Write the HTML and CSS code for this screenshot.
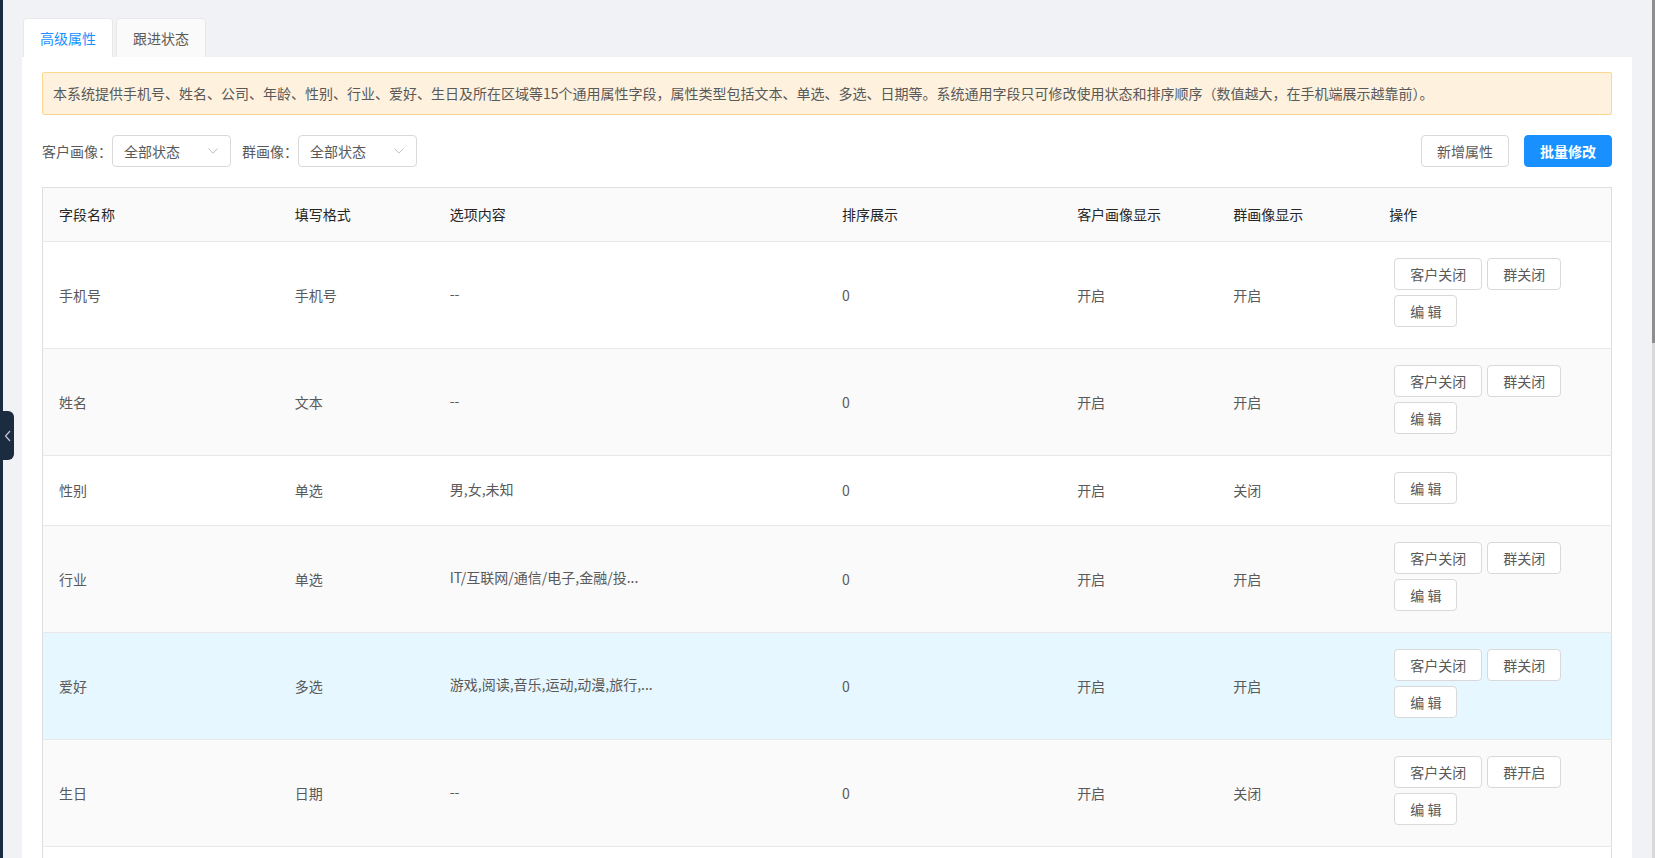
FILE: index.html
```html
<!DOCTYPE html>
<html lang="zh-CN">
<head>
<meta charset="utf-8">
<title>高级属性</title>
<link rel="stylesheet" href="styles.css">
</head>
<body>
<div class="app">
  <div class="sidebar"></div>
  <div class="collapse">
    <svg width="8" height="12" viewBox="0 0 8 12"><path d="M6 1 L1.5 6 L6 11" fill="none" stroke="#c3cad6" stroke-width="1.2"/></svg>
  </div>
  <main class="main">
    <div class="tabs">
      <div class="tab active">高级属性</div>
      <div class="tab">跟进状态</div>
    </div>
    <section class="panel">
      <div class="alert">本系统提供手机号、姓名、公司、年龄、性别、行业、爱好、生日及所在区域等15个通用属性字段，属性类型包括文本、单选、多选、日期等。系统通用字段只可修改使用状态和排序顺序（数值越大，在手机端展示越靠前）。</div>
      <div class="toolbar">
        <div class="filters">
          <span class="label">客户画像：</span>
          <div class="select"><span>全部状态</span><svg class="arrow" width="10" height="6" viewBox="0 0 10 6"><path d="M0.5 0.5 L5 5.2 L9.5 0.5" fill="none" stroke="#bfbfbf" stroke-width="1"/></svg></div>
          <span class="label label-gap">群画像：</span>
          <div class="select"><span>全部状态</span><svg class="arrow" width="10" height="6" viewBox="0 0 10 6"><path d="M0.5 0.5 L5 5.2 L9.5 0.5" fill="none" stroke="#bfbfbf" stroke-width="1"/></svg></div>
        </div>
        <div class="actions">
          <button class="btn">新增属性</button>
          <button class="btn primary">批量修改</button>
        </div>
      </div>
      <table class="grid">
        <colgroup>
          <col class="c1"><col class="c2"><col class="c3"><col class="c4"><col class="c5"><col class="c6"><col class="c7">
        </colgroup>
        <thead>
          <tr><th>字段名称</th><th>填写格式</th><th>选项内容</th><th>排序展示</th><th>客户画像显示</th><th>群画像显示</th><th>操作</th></tr>
        </thead>
        <tbody>
          <tr>
            <td>手机号</td><td>手机号</td><td><div class="opt">--</div></td><td>0</td><td>开启</td><td>开启</td>
            <td class="op"><div class="ops"><div class="ops-row"><button class="btn sm">客户关闭</button><button class="btn sm">群关闭</button></div><div class="ops-row"><button class="btn sm">编 辑</button></div></div></td>
          </tr>
          <tr class="alt">
            <td>姓名</td><td>文本</td><td><div class="opt">--</div></td><td>0</td><td>开启</td><td>开启</td>
            <td class="op"><div class="ops"><div class="ops-row"><button class="btn sm">客户关闭</button><button class="btn sm">群关闭</button></div><div class="ops-row"><button class="btn sm">编 辑</button></div></div></td>
          </tr>
          <tr>
            <td>性别</td><td>单选</td><td><div class="opt">男,女,未知</div></td><td>0</td><td>开启</td><td>关闭</td>
            <td class="op"><div class="ops"><div class="ops-row"><button class="btn sm">编 辑</button></div></div></td>
          </tr>
          <tr class="alt">
            <td>行业</td><td>单选</td><td><div class="opt">IT/互联网/通信/电子,金融/投...</div></td><td>0</td><td>开启</td><td>开启</td>
            <td class="op"><div class="ops"><div class="ops-row"><button class="btn sm">客户关闭</button><button class="btn sm">群关闭</button></div><div class="ops-row"><button class="btn sm">编 辑</button></div></div></td>
          </tr>
          <tr class="hover">
            <td>爱好</td><td>多选</td><td><div class="opt">游戏,阅读,音乐,运动,动漫,旅行,...</div></td><td>0</td><td>开启</td><td>开启</td>
            <td class="op"><div class="ops"><div class="ops-row"><button class="btn sm">客户关闭</button><button class="btn sm">群关闭</button></div><div class="ops-row"><button class="btn sm">编 辑</button></div></div></td>
          </tr>
          <tr class="alt">
            <td>生日</td><td>日期</td><td><div class="opt">--</div></td><td>0</td><td>开启</td><td>关闭</td>
            <td class="op"><div class="ops"><div class="ops-row"><button class="btn sm">客户关闭</button><button class="btn sm">群开启</button></div><div class="ops-row"><button class="btn sm">编 辑</button></div></div></td>
          </tr>
          <tr class="last">
            <td></td><td></td><td></td><td></td><td></td><td></td><td></td>
          </tr>
        </tbody>
      </table>
    </section>
  </main>
  <div class="scrollbar"><div class="thumb"></div></div>
</div>
</body>
</html>
```

FILE: styles.css
```css
* { box-sizing: border-box; }
html, body {
  margin: 0;
  padding: 0;
  height: 858px;
  overflow: hidden;
}
body {
  font-family: "Noto Sans CJK SC", "Liberation Sans", sans-serif;
  font-size: 14px;
  line-height: 21px;
  color: #595959;
  background: #f0f2f5;
}
.app {
  display: flex;
  height: 858px;
  position: relative;
}
.sidebar {
  width: 3px;
  flex: none;
  background: #1b2b40;
}
.collapse {
  position: absolute;
  left: 0;
  top: 411px;
  width: 14px;
  height: 49px;
  background: #1b2b40;
  border-radius: 0 6px 6px 0;
  display: flex;
  align-items: center;
  justify-content: center;
  padding-left: 1px;
}
.main {
  flex: 1;
  min-width: 0;
  padding: 18px 20px 0 19px;
}
.scrollbar {
  width: 3px;
  flex: none;
  background: #d9d9dc;
}
.scrollbar .thumb {
  height: 343px;
  background: #8d8d8f;
}
.tabs {
  display: flex;
  gap: 3px;
  padding-left: 1px;
}
.tab {
  height: 39px;
  line-height: 38px;
  padding: 0 16px;
  border: 1px solid #e8e8e8;
  border-bottom: none;
  border-radius: 4px 4px 0 0;
  background: #fafafa;
  color: #595959;
}
.tab.active {
  background: #fff;
  color: #1890ff;
}
.panel {
  background: #fff;
  padding: 15px 20px 0;
  height: 801px;
  overflow: hidden;
}
.alert {
  background: #fef2de;
  border: 1px solid #fbd88f;
  border-radius: 2px;
  padding: 10px 10px;
  color: #595959;
  white-space: nowrap;
}
.toolbar {
  margin-top: 20px;
  display: flex;
  justify-content: space-between;
  align-items: center;
}
.filters {
  display: flex;
  align-items: center;
}
.label {
  color: #595959;
}
.label-gap {
  margin-left: 11px;
}
.select {
  width: 119px;
  height: 32px;
  border: 1px solid #d9d9d9;
  border-radius: 4px;
  display: flex;
  align-items: center;
  justify-content: space-between;
  padding: 0 12px 0 11px;
  color: #595959;
}
.arrow { display: block; }
.actions {
  display: flex;
  gap: 15px;
}
.btn {
  font-family: inherit;
  font-size: 14px;
  height: 32px;
  padding: 0 15px;
  border: 1px solid #d9d9d9;
  border-radius: 4px;
  background: #fff;
  color: #595959;
  line-height: 30px;
  white-space: nowrap;
}
.actions .btn { width: 88px; padding: 0; }
.btn.primary {
  background: #1890ff;
  border-color: #1890ff;
  color: #fff;
  font-weight: 600;
}
.grid {
  margin-top: 20px;
  width: 100%;
  border-collapse: collapse;
  table-layout: fixed;
  border: 1px solid #dedede;
}
.c1 { width: 236px; }
.c2 { width: 155px; }
.c3 { width: 392px; }
.c4 { width: 235px; }
.c5 { width: 156px; }
.c6 { width: 156px; }
.c7 { width: 238px; }
th {
  background: #fafafa;
  color: #262626;
  font-weight: 400;
  text-align: left;
  padding: 16px;
  border-bottom: 1px solid #e8e8e8;
}
td {
  padding: 0 16px;
  vertical-align: middle;
  border-bottom: 1px solid #e8e8e8;
  color: #595959;
  white-space: nowrap;
}
tr.alt td { background: #fafafa; }
tr.hover td { background: #e6f7ff; }
tr.last td { height: 106px; }
.opt { padding-bottom: 3px; }
td.op {
  padding: 16px 16px 21px 21px;
}
.ops {
  display: flex;
  flex-direction: column;
  gap: 5px;
}
.ops-row {
  display: flex;
  gap: 5px;
}
```
